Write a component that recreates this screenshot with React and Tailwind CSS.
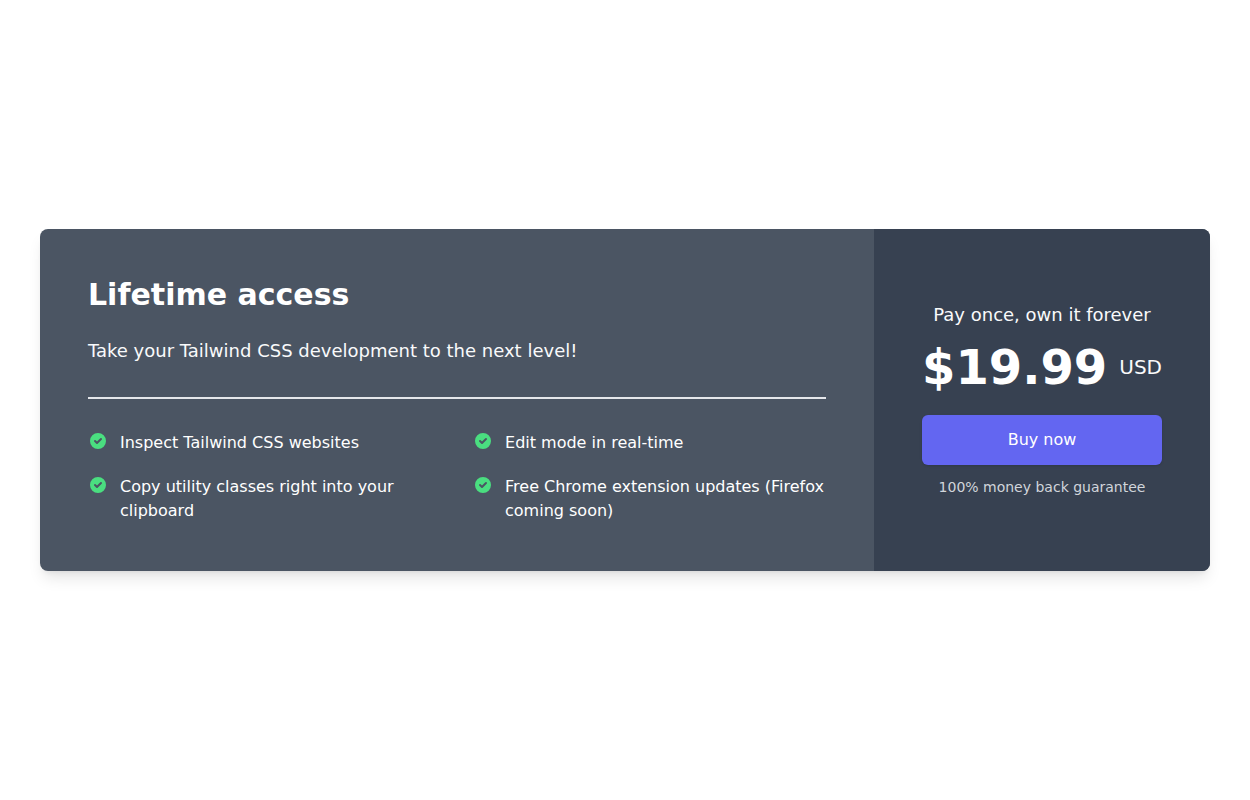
const features = [
  "Inspect Tailwind CSS websites",
  "Edit mode in real-time",
  "Copy utility classes right into your clipboard",
  "Free Chrome extension updates (Firefox coming soon)",
];

function CheckIcon() {
  return (
    <svg
      className="h-5 w-5 shrink-0 text-[#4ade80]"
      viewBox="0 0 20 20"
      fill="currentColor"
      aria-hidden="true"
    >
      <path
        fillRule="evenodd"
        clipRule="evenodd"
        d="M10 18a8 8 0 100-16 8 8 0 000 16zm3.707-9.293a1 1 0 00-1.414-1.414L9 10.586 7.707 9.293a1 1 0 00-1.414 1.414l2 2a1 1 0 001.414 0l4-4z"
      />
    </svg>
  );
}

export default function App() {
  return (
    <main className="flex min-h-screen items-center justify-center bg-white px-10 font-['DejaVu_Sans',sans-serif]">
      <section className="flex w-full max-w-7xl overflow-hidden rounded-lg bg-[#4b5563] shadow-lg">
        <div className="flex-1 p-12">
          <h2 className="text-3xl font-bold text-white">Lifetime access</h2>
          <p className="mt-6 text-lg text-[#f9fafb]">
            Take your Tailwind CSS development to the next level!
          </p>
          <hr className="my-8 border-t-2 border-[#e5e7eb]" />
          <ul className="grid grid-cols-2 gap-x-8 gap-y-5">
            {features.map((feature) => (
              <li key={feature} className="flex items-start gap-3 text-base text-white">
                <CheckIcon />
                <span>{feature}</span>
              </li>
            ))}
          </ul>
        </div>
        <div className="flex flex-col justify-center bg-[#374151] p-12 text-center">
          <p className="text-lg leading-6 text-[#f9fafb]">Pay once, own it forever</p>
          <p className="mt-4 flex items-center justify-center gap-3 text-5xl leading-none font-bold text-white">
            $19.99
            <span className="text-xl font-normal text-[#f9fafb]">USD</span>
          </p>
          <button
            type="button"
            className="mt-6 rounded-md border border-transparent bg-[#6366f1] px-5 py-3 text-base text-white shadow-sm"
          >
            Buy now
          </button>
          <p className="mt-3 text-sm text-[#d1d5db]">100% money back guarantee</p>
        </div>
      </section>
    </main>
  );
}
